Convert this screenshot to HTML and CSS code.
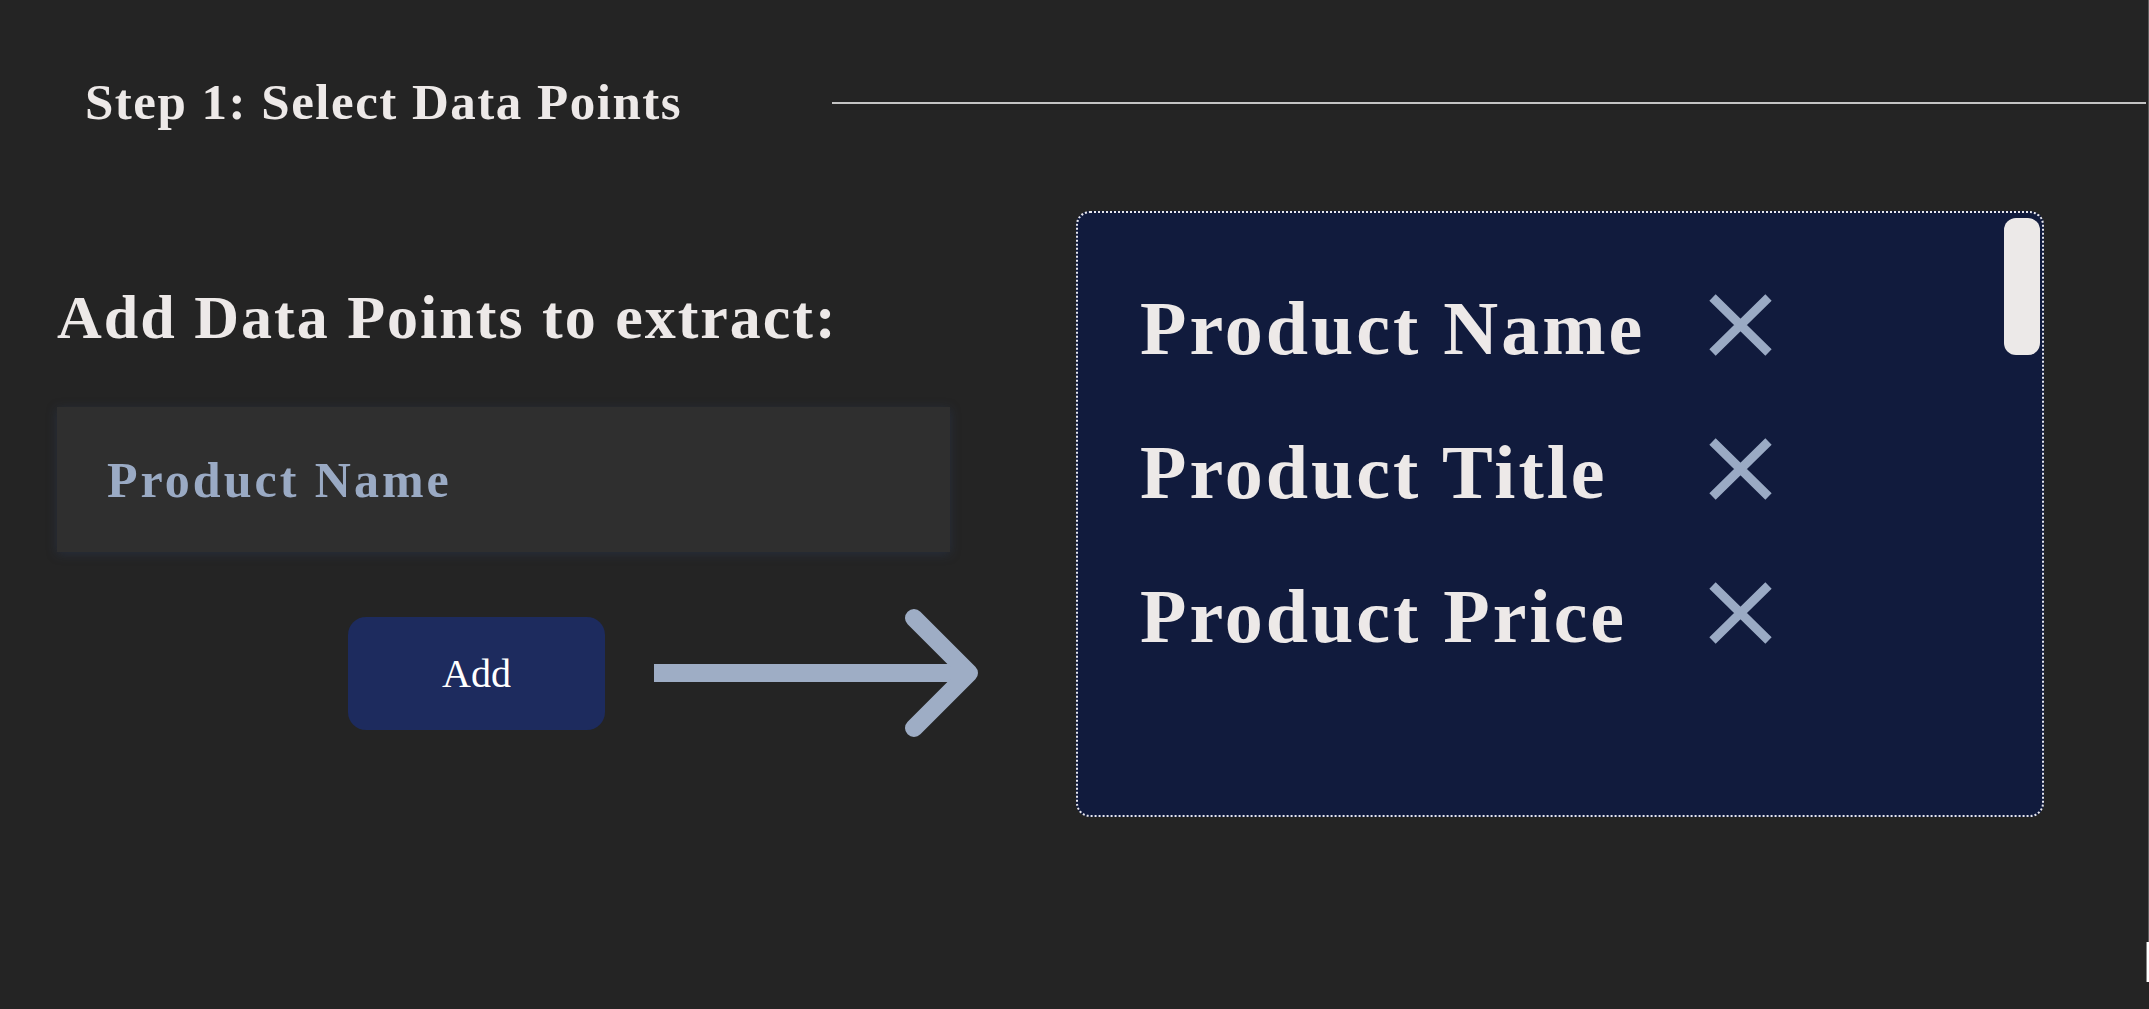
FILE: index.html
```html
<!DOCTYPE html>
<html lang="en">
<head>
<meta charset="utf-8">
<title>Step 1: Select Data Points</title>
<link rel="stylesheet" href="styles.css">
</head>
<body>
<div class="page">
  <header class="step-header">
    <h1 class="step-title">Step 1: Select Data Points</h1>
    <div class="step-rule"></div>
  </header>

  <main class="main">
    <section class="left-col">
      <h2 class="add-title">Add Data Points to extract:</h2>
      <div class="input-box"><span class="input-text">Product Name</span></div>
      <div class="action-row">
        <button class="add-btn">Add</button>
        <svg class="arrow" width="330" height="140" viewBox="0 0 330 140">
          <path d="M0 70 H314" stroke="#9eadc5" stroke-width="18" fill="none"/>
          <polyline points="260,15 315,70 260,125" stroke="#9eadc5" stroke-width="18" fill="none" stroke-linecap="round" stroke-linejoin="round"/>
        </svg>
      </div>
    </section>

    <section class="panel">
      <div class="list">
        <span class="item-text">Product Name</span>
        <svg class="x-icon" width="63" height="62" viewBox="0 0 63 62"><path d="M3.5 3.5 L59.5 58.5 M59.5 3.5 L3.5 58.5" stroke="#9aaac4" stroke-width="9" fill="none"/></svg>
        <span class="item-text">Product Title</span>
        <svg class="x-icon" width="63" height="62" viewBox="0 0 63 62"><path d="M3.5 3.5 L59.5 58.5 M59.5 3.5 L3.5 58.5" stroke="#9aaac4" stroke-width="9" fill="none"/></svg>
        <span class="item-text">Product Price</span>
        <svg class="x-icon" width="63" height="62" viewBox="0 0 63 62"><path d="M3.5 3.5 L59.5 58.5 M59.5 3.5 L3.5 58.5" stroke="#9aaac4" stroke-width="9" fill="none"/></svg>
      </div>
      <div class="thumb"></div>
    </section>
  </main>
  <div class="edge-track"></div>
  <div class="edge-thumb"></div>
</div>
</body>
</html>
```

FILE: styles.css
```css
html, body {
  margin: 0;
  padding: 0;
  background: #242424;
}
body {
  font-family: "Liberation Serif", "Times New Roman", serif;
  color: #ede9e8;
  width: 2149px;
  height: 1009px;
  overflow: hidden;
}
.page {
  position: relative;
  height: 1009px;
}
.step-header {
  display: flex;
  align-items: center;
  padding-top: 76px;
  height: 52px;
}
.step-title {
  margin: 0 0 0 85px;
  font-size: 51px;
  line-height: 52px;
  font-weight: 700;
  letter-spacing: 1.5px;
  white-space: nowrap;
}
.step-rule {
  flex: 1;
  height: 2px;
  margin-left: 150px;
  margin-right: 3px;
  margin-top: 2px;
  background: #c4c4c4;
}
.main {
  display: flex;
  margin-top: 83px;
}
.left-col {
  display: flex;
  flex-direction: column;
  padding-left: 57px;
  width: 1076px;
  box-sizing: border-box;
}
.add-title {
  margin: 70px 0 0 0;
  font-size: 62px;
  line-height: 72px;
  font-weight: 700;
  letter-spacing: 2px;
  white-space: nowrap;
}
.input-box {
  margin-top: 54px;
  width: 893px;
  height: 145px;
  background: #2f2f2f;
  display: flex;
  align-items: center;
  padding-left: 50px;
  box-sizing: border-box;
  box-shadow: 0 2px 10px rgba(45, 65, 105, 0.35);
}
.input-text {
  font-size: 50px;
  font-weight: 700;
  letter-spacing: 3px;
  color: #9aaac4;
}
.action-row {
  display: flex;
  align-items: center;
  margin-top: 51px;
  padding-left: 291px;
}
.add-btn {
  width: 257px;
  height: 113px;
  border: none;
  border-radius: 18px;
  background: #1d2b5e;
  color: #ffffff;
  font-family: "Liberation Serif", "Times New Roman", serif;
  font-size: 40px;
  font-weight: 400;
  padding: 0;
}
.arrow {
  display: block;
  margin-left: 49px;
}
.panel {
  position: relative;
  width: 968px;
  height: 606px;
  box-sizing: border-box;
  border: 2px dotted #e6e6ee;
  border-radius: 14px;
  background: #111b3d;
  padding: 43px 0 0 62px;
}
.list {
  display: grid;
  grid-template-columns: max-content max-content;
  grid-auto-rows: 144px;
  align-items: center;
  column-gap: 64px;
}
.item-text {
  font-size: 76px;
  font-weight: 700;
  letter-spacing: 3px;
  line-height: 144px;
  color: #ede9e8;
}
.x-icon {
  display: block;
  margin-top: -6px;
}
.thumb {
  position: absolute;
  top: 5px;
  right: 2px;
  width: 36px;
  height: 137px;
  border-radius: 12px;
  background: #ece9e8;
}
.edge-track {
  position: absolute;
  top: 0;
  right: 0;
  width: 1px;
  height: 942px;
  background: #5e5e5e;
}
.edge-thumb {
  position: absolute;
  top: 942px;
  right: 0;
  width: 2px;
  height: 40px;
  background: #ffffff;
  border-left: 1px solid #888;
}
```
